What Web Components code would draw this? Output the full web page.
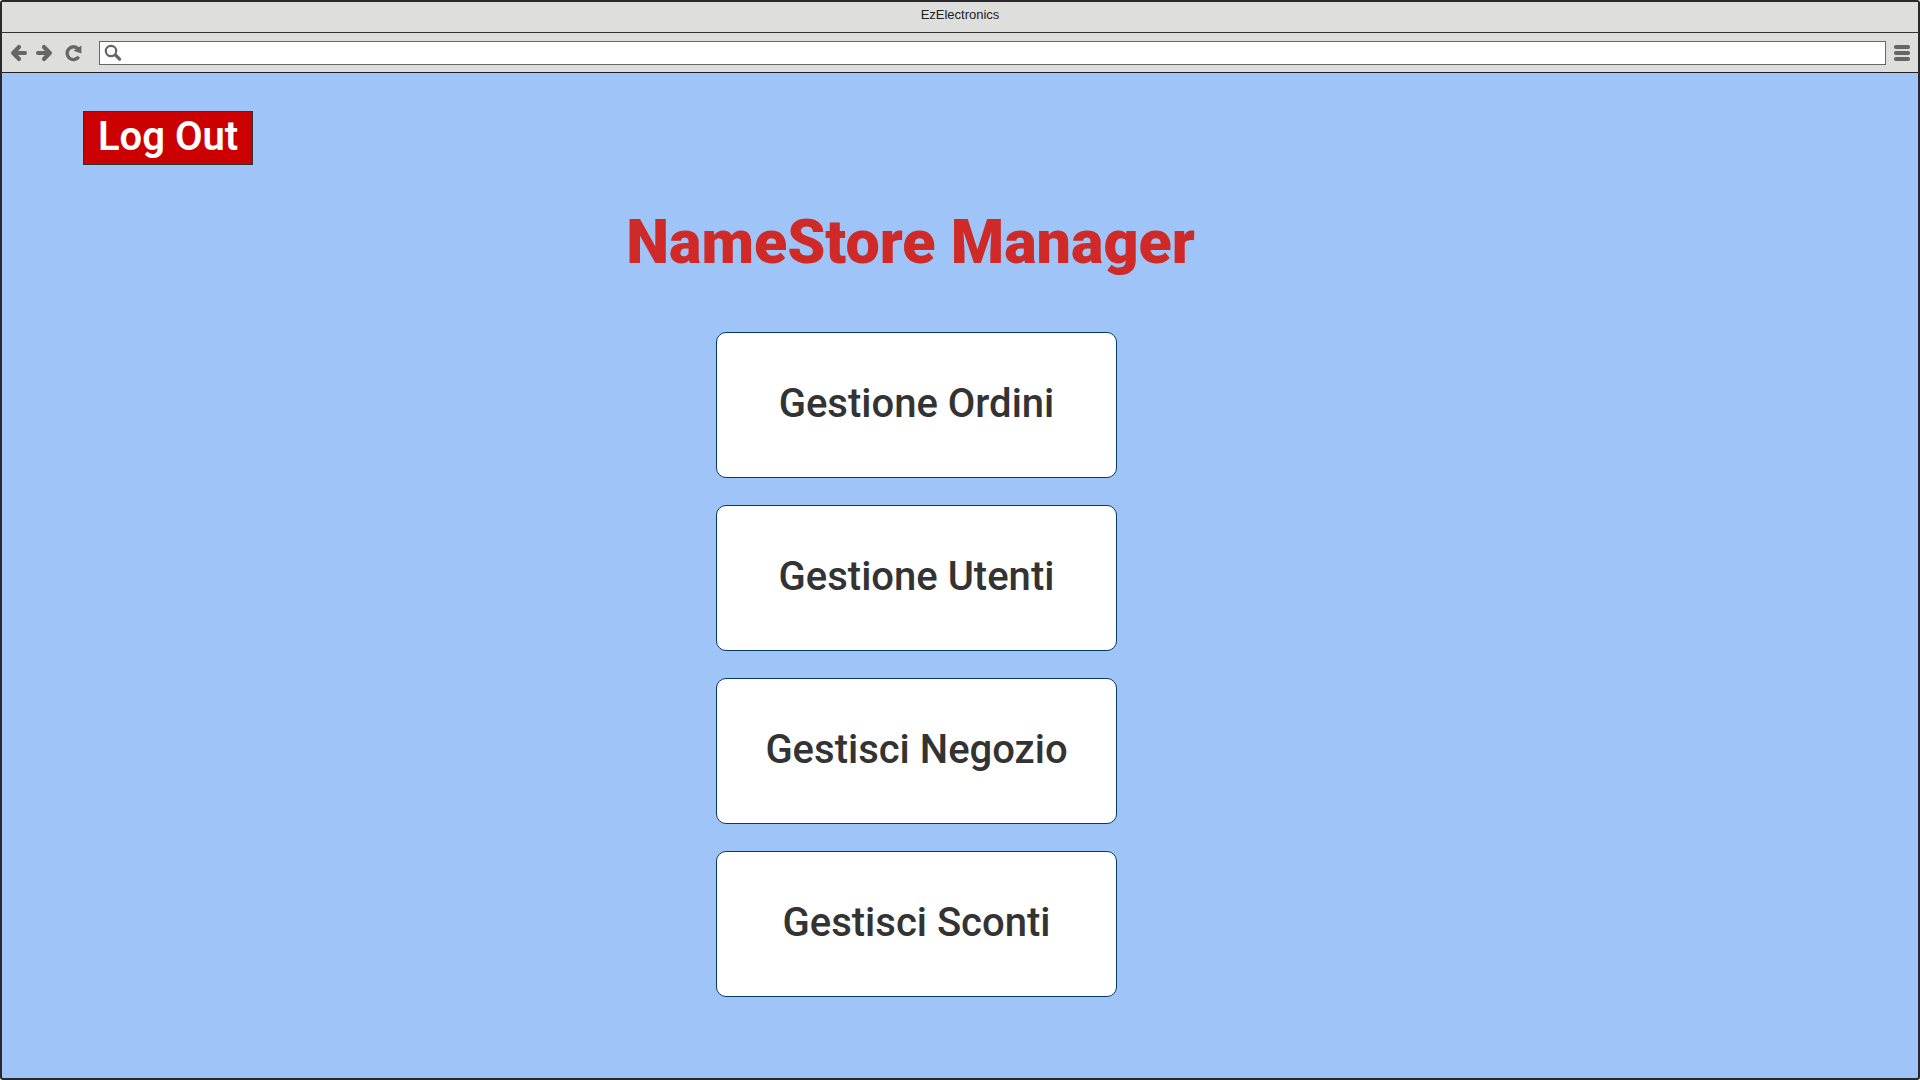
<!DOCTYPE html>
<html lang="it">
<head>
<meta charset="utf-8">
<meta name="viewport" content="width=device-width, initial-scale=1">
<title>EzElectronics</title>
<style>
  body { margin: 0; background: #fff; }
</style>
</head>
<body>
<browser-window heading="EzElectronics">
  <manager-page heading="NameStore Manager">
    <logout-button slot="account">Log Out</logout-button>
    <menu-card>Gestione Ordini</menu-card>
    <menu-card>Gestione Utenti</menu-card>
    <menu-card>Gestisci Negozio</menu-card>
    <menu-card>Gestisci Sconti</menu-card>
  </manager-page>
</browser-window>

<script>
class BaseElement extends HTMLElement {
  connectedCallback() {
    if (this.shadowRoot) return;
    this.attachShadow({ mode: 'open' }).innerHTML = this.render();
  }
}

// Window frame: title bar, toolbar with address field, and the page inside
customElements.define('browser-window', class extends BaseElement {
  render() {
    return `
      <style>
        :host { display: flex; flex-direction: column; box-sizing: border-box; min-height: 100vh;
          border: 2px solid #2b292b; border-radius: 3px; background: #9fc5f8; }
        .title { box-sizing: border-box; height: 31px; padding-top: 5px; background: #dededc;
          border-bottom: 1px solid #333; text-align: center;
          font: 13px/16px "Liberation Sans", sans-serif; color: #222; }
        ::slotted(*) { flex: 1; }
      </style>
      <header>
        <div class="title">${this.getAttribute('heading')}</div>
        <browser-toolbar></browser-toolbar>
      </header>
      <slot></slot>`;
  }
});

customElements.define('browser-toolbar', class extends BaseElement {
  render() {
    return `
      <style>
        :host { display: flex; align-items: center; box-sizing: border-box; height: 40px;
          padding: 0 7px 0 8px; background: #dededc; border-bottom: 1px solid #231f20; color: #666; }
        button { display: flex; padding: 0; border: 0; background: none; color: inherit; }
        svg { display: block; flex: none; width: 18px; height: 18px; fill: none; stroke: currentColor;
          stroke-linecap: round; stroke-linejoin: round; }
        nav { display: flex; margin-right: 16px; }
        nav button + button { margin-left: 7px; }
        nav button:last-child { margin-left: 12px; }
        label { display: flex; flex: 1; align-items: center; gap: 4px; box-sizing: border-box; height: 24px;
          margin-right: 7px; padding-left: 4px; border: 1px solid #666; background: #fff; }
        input { flex: 1; min-width: 0; height: 22px; padding: 0; border: 0; outline: 0;
          background: none; font: 13px/16px "Liberation Sans", sans-serif; color: #333; }
      </style>
      <nav>
        <button aria-label="Indietro"><svg viewBox="0 0 18 18"><path d="M3.5 9H15" stroke-width="4"/><path d="M9 3L3.2 9 9 15" stroke-width="4.2"/></svg></button>
        <button aria-label="Avanti"><svg viewBox="0 0 18 18"><path d="M3 9h11.5" stroke-width="4"/><path d="M9 3l5.8 6L9 15" stroke-width="4.2"/></svg></button>
        <button aria-label="Ricarica"><svg viewBox="0 0 18 18"><path d="M13.2 4.8A6.4 6.4 0 1 0 13.8 12.8" stroke-width="3.3" stroke-linecap="butt"/><path d="M16.4 1.6V9.4L8.6 6.8z" fill="currentColor" stroke="none"/></svg></button>
      </nav>
      <label>
        <svg viewBox="0 0 18 18"><circle cx="7" cy="7" r="5.2" stroke-width="2.2"/><path d="M11.6 11.2l4 4" stroke-width="3.2"/></svg>
        <input type="text" aria-label="Indirizzo">
      </label>
      <button aria-label="Menu"><svg viewBox="0 0 18 18"><path d="M2.8 3h12.4M2.8 9h12.4M2.8 15h12.4" stroke-width="3.8"/></svg></button>`;
  }
});

customElements.define('manager-page', class extends BaseElement {
  render() {
    return `
      <style>
        :host { display: block; padding: 38px 0 40px; }
        .account { padding-left: 81px; }
        main { display: flex; flex-direction: column; align-items: center;
          padding-top: 41px; padding-right: 87px; }
        h1 { margin: 0 0 54px; padding-right: 12px; color: #cf2a27; text-align: center;
          font: 900 61px/72px Roboto, sans-serif; }
        .cards { display: flex; flex-direction: column; gap: 27px; width: 401px; max-width: 100%; }
      </style>
      <div class="account"><slot name="account"></slot></div>
      <main>
        <h1>${this.getAttribute('heading')}</h1>
        <div class="cards"><slot></slot></div>
      </main>`;
  }
});

customElements.define('logout-button', class extends BaseElement {
  render() {
    return `
      <style>
        :host { display: flex; }
        button { margin: 0; padding: 2px 14px 4px; border: 1px solid #333; background: #c00; color: #fff;
          font: 600 40px/46px Roboto, sans-serif; }
      </style>
      <button><slot></slot></button>`;
  }
});

customElements.define('menu-card', class extends BaseElement {
  render() {
    return `
      <style>
        :host { display: block; }
        button { display: block; width: 100%; margin: 0; padding: 48px 16px 50px; border: 1px solid #073763;
          border-radius: 10px; background: #fff; color: #333; font: 500 40px/46px Roboto, sans-serif; }
      </style>
      <button><slot></slot></button>`;
  }
});
</script>
</body>
</html>
